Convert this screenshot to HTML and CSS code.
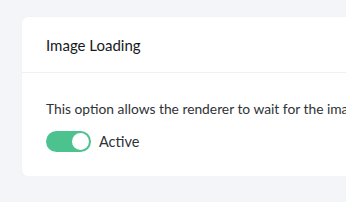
FILE: index.html
```html
<!DOCTYPE html>
<html>
<head>
<meta charset="utf-8">
<link rel="stylesheet" href="styles.css">
</head>
<body>
<div class="page">
  <div class="card">
    <div class="card-header">Image Loading</div>
    <div class="card-body">
      <p class="desc">This option allows the renderer to wait for the images to load before capturing the page.</p>
      <label class="toggle-row">
        <span class="switch"><span class="knob"></span></span>
        <span class="toggle-label">Active</span>
      </label>
    </div>
  </div>
</div>
</body>
</html>
```
FILE: styles.css
```css
html, body {
  margin: 0;
  padding: 0;
  background: #f4f5f8;
  font-family: "Lato", "Noto Sans", sans-serif;
  overflow: hidden;
}
.page {
  padding: 17px 0 0 22px;
  width: 600px;
}
.card {
  background: #ffffff;
  border-radius: 6px;
  box-shadow: 0 0 2px rgba(0,0,0,0.04);
  width: 560px;
}
.card-header {
  height: 56px;
  box-sizing: border-box;
  padding: 0 24px;
  display: flex;
  align-items: center;
  font-size: 15px;
  color: #16191d;
  border-bottom: 1px solid #eef0f3;
}
.card-body {
  padding: 26px 24px 24px;
}
.desc {
  margin: 0;
  font-size: 13.8px;
  color: #2f3237;
  white-space: nowrap;
  line-height: 20px;
}
.toggle-row {
  display: flex;
  align-items: center;
  gap: 8px;
  margin-top: 12px;
}
.switch {
  width: 45px;
  height: 21px;
  border-radius: 11px;
  background: #4cc38f;
  position: relative;
  display: inline-block;
}
.knob {
  position: absolute;
  right: 2px;
  top: 2px;
  width: 17px;
  height: 17px;
  border-radius: 50%;
  background: #ffffff;
}
.toggle-label {
  font-size: 14.5px;
  color: #2f3237;
}
```
